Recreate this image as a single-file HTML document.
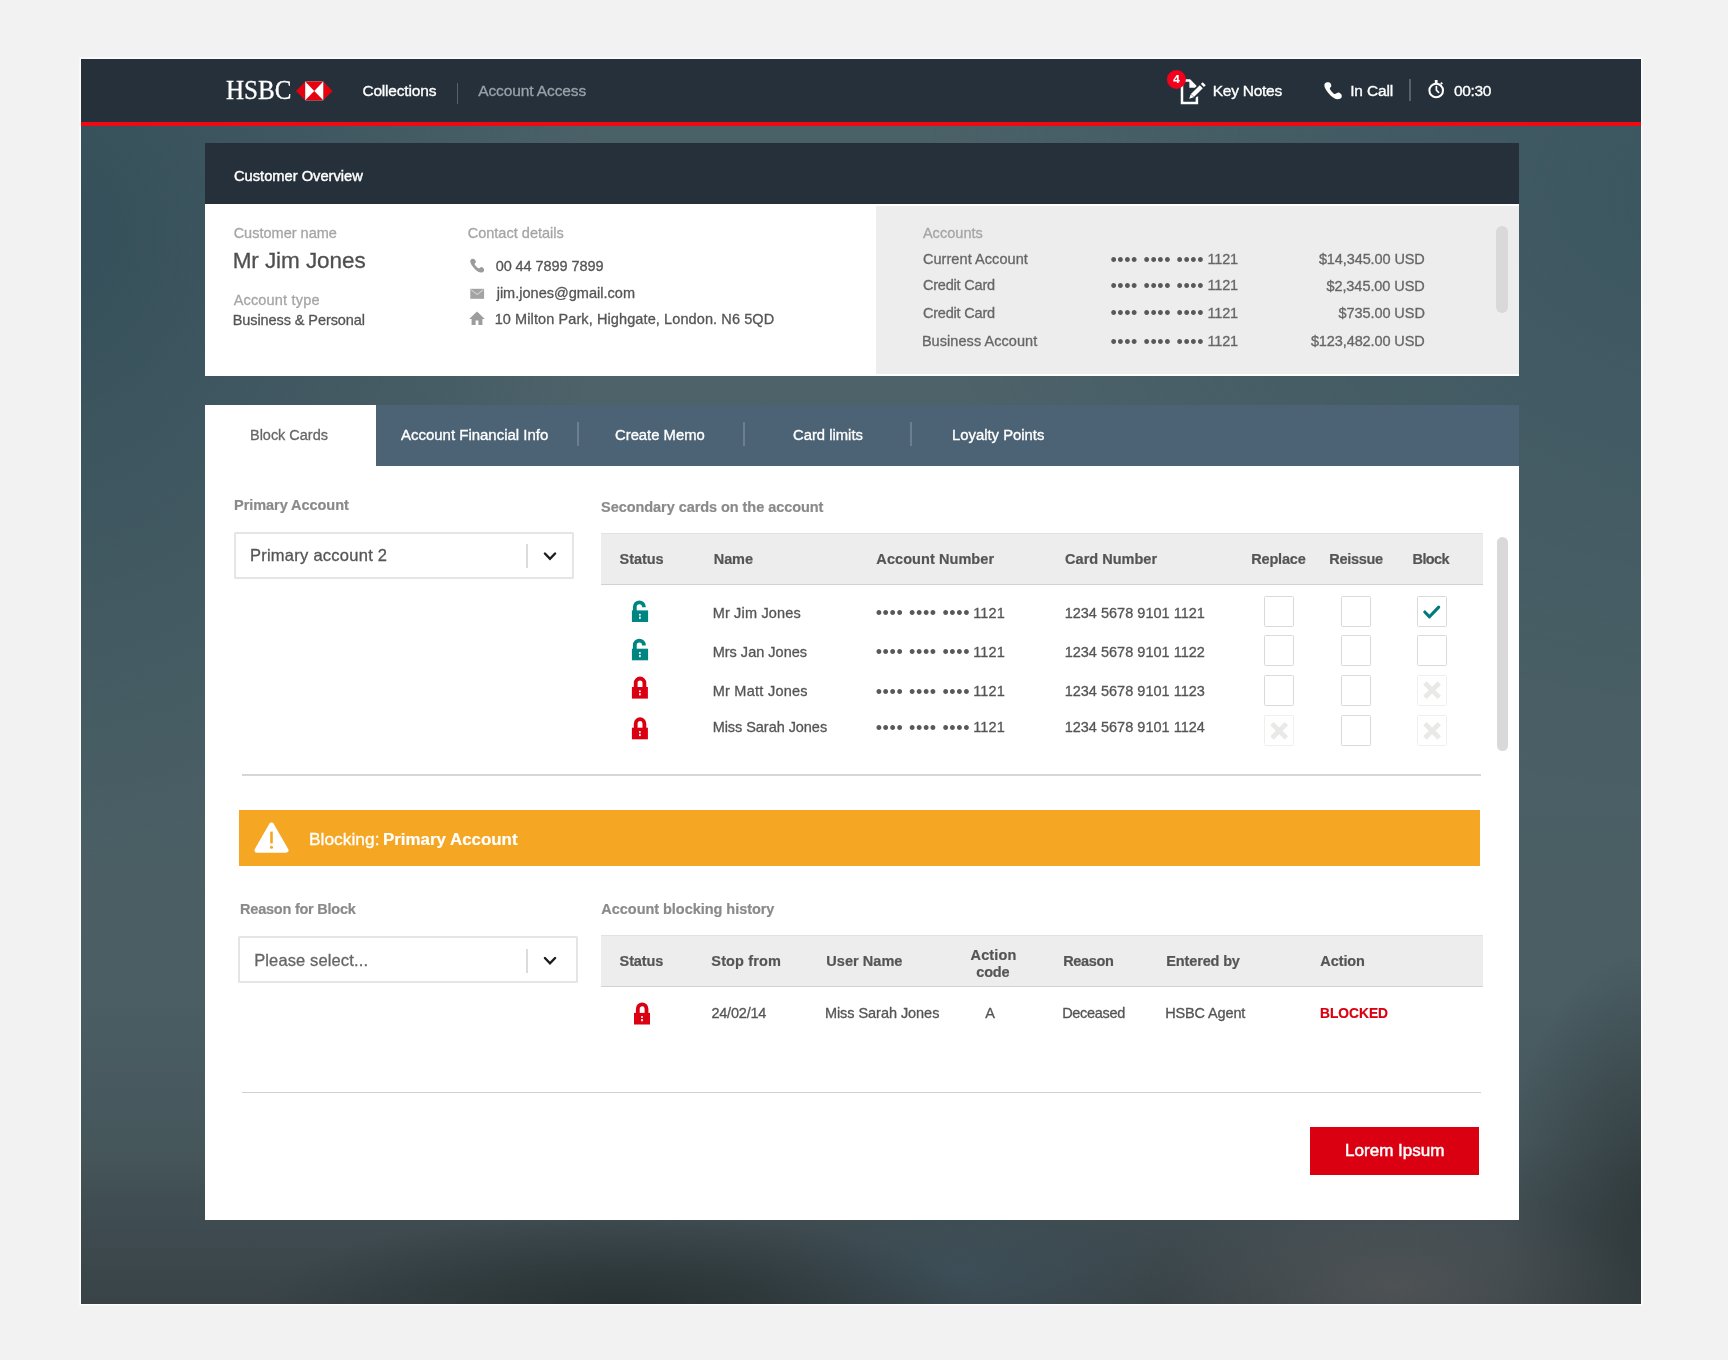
<!DOCTYPE html>
<html lang="en"><head><meta charset="utf-8"><title>HSBC Collections - Account Access</title>
<style>
*{margin:0;padding:0;box-sizing:border-box}
html,body{width:1728px;height:1360px;overflow:hidden}
body{background:#f2f2f2;font-family:"Liberation Sans",sans-serif;position:relative}
.t{position:absolute;white-space:pre;line-height:1;display:block}
.a{position:absolute}
#frame{left:81px;top:58.8px;width:1560.2px;height:1245.2px;overflow:hidden;box-shadow:0 0 0 1.6px #fcfcfc;
 background:
  radial-gradient(ellipse 240px 110px at 1315px 1228px, rgba(90,90,92,.62), rgba(90,90,92,0) 100%),
  radial-gradient(ellipse 360px 95px at 540px 1250px, rgba(36,46,48,.85), rgba(36,46,48,0) 100%),
  radial-gradient(ellipse 210px 80px at 880px 1215px, rgba(62,84,98,.55), rgba(62,84,98,0) 100%),
  radial-gradient(ellipse 150px 260px at 1570px 1150px, rgba(44,52,54,.78), rgba(44,52,54,0) 100%),
  radial-gradient(ellipse 560px 620px at -40px 180px, rgba(46,74,86,.8), rgba(46,74,86,0) 100%),
  radial-gradient(ellipse 820px 600px at 1660px 140px, rgba(48,78,90,.62), rgba(48,78,90,0) 100%),
  linear-gradient(180deg,#4a6067 0%,#4d6269 25%,#4b6066 50%,#4a5e64 75%,#46575c 87%,#3f4c51 93%,#394347 100%)}
#topbar{left:81px;top:58.8px;width:1560.2px;height:63.2px;background:#25303a}
#redline{left:81px;top:121.7px;width:1560.2px;height:4.6px;background:#ee0a14}
#cohead{left:205px;top:142.5px;width:1313.7px;height:61.5px;background:#25303a}
#cobody{left:205px;top:204px;width:1313.7px;height:172.3px;background:#fff}
#cogray{left:876.3px;top:205.6px;width:642.4px;height:168.4px;background:#ededed}
.sb{background:#d9d9d9;border-radius:6px}
#tabbar{left:205px;top:404.5px;width:1313.7px;height:61.8px;background:#4c6375}
#tabact{left:205px;top:404.5px;width:170.8px;height:63px;background:#fff}
#main{left:205px;top:466px;width:1313.7px;height:754.2px;background:#fff}
.tdiv{width:1.6px;height:24px;top:422.3px;background:#6b7f8f}
.sel{border:2px solid #e5e5e5;background:#fff;border-radius:1.5px}
.seldiv{width:1.5px;background:#dcdcdc}
.th{background:#ededed;border-top:1.5px solid #e2e2e2;border-bottom:1.5px solid #d2d2d2}
.hr{height:2px;background:#d6d6d6}
.cb{width:30.3px;height:31px;border:1.5px solid #d9d9d9;border-radius:1.5px;background:#fff}
.cb.dis{border-color:#efefef}
#banner{left:239px;top:810.2px;width:1241.3px;height:56px;background:#f5a623}
#btn{left:1310.3px;top:1127px;width:169.2px;height:47.6px;background:#db0011}
svg{position:absolute;overflow:visible}
#txt{position:absolute;left:0;top:0;width:1728px;height:1360px;will-change:transform}

</style></head><body>
<div id=frame class="a"></div>
<div id=topbar class="a"></div>
<div id=redline class="a"></div>
<div class="a" style="left:456.7px;top:82.5px;width:1.6px;height:21.5px;background:#56616b"></div>
<div class="a" style="left:1409.3px;top:79.3px;width:1.8px;height:21.3px;background:#56616b"></div>
<div id=cohead class="a"></div>
<div id=cobody class="a"></div>
<div id=cogray class="a"></div>
<div class="a sb" style="left:1496px;top:225.5px;width:12px;height:87px"></div>
<div id=main class="a"></div>
<div id=tabbar class="a"></div>
<div id=tabact class="a"></div>
<div class="a tdiv" style="left:577.0px"></div>
<div class="a tdiv" style="left:743.4px"></div>
<div class="a tdiv" style="left:910.2px"></div>
<div class="a sel" style="left:233.5px;top:531.5px;width:340px;height:47.6px"></div>
<div class="a seldiv" style="left:526px;top:544.4px;height:24px"></div>
<div class="a sel" style="left:238px;top:935.9px;width:339.8px;height:47.6px"></div>
<div class="a seldiv" style="left:526px;top:948.9px;height:24px"></div>
<div class="a th" style="left:600.7px;top:532.6px;width:882.2px;height:52.4px"></div>
<div class="a th" style="left:600.7px;top:935px;width:882.2px;height:52.4px"></div>
<div class="a sb" style="left:1497px;top:537px;width:11px;height:214.3px"></div>
<div class="a hr" style="left:242px;top:774px;width:1239.3px"></div>
<div class="a hr" style="left:242px;top:1092px;width:1239.3px;height:1px;background:#d0d0d0"></div>
<div class="a cb" style="left:1264px;top:596px"></div>
<div class="a cb" style="left:1340.5px;top:596px"></div>
<div class="a cb" style="left:1417px;top:596px"></div>
<div class="a cb" style="left:1264px;top:635.2px"></div>
<div class="a cb" style="left:1340.5px;top:635.2px"></div>
<div class="a cb" style="left:1417px;top:635.2px"></div>
<div class="a cb" style="left:1264px;top:674.8px"></div>
<div class="a cb" style="left:1340.5px;top:674.8px"></div>
<div class="a cb dis" style="left:1417px;top:674.8px"></div>
<div class="a cb dis" style="left:1264px;top:715.4px"></div>
<div class="a cb" style="left:1340.5px;top:715.4px"></div>
<div class="a cb dis" style="left:1417px;top:715.4px"></div>
<div id=banner class="a"></div>
<div id=btn class="a"></div>
<svg width="1728" height="1360" viewBox="0 0 1728 1360" style="left:0;top:0"><g><polygon points="296,90.9 305.2,81.5 305.2,100.3" fill="#e8000f"/><polygon points="332.5,90.9 323.3,81.5 323.3,100.3" fill="#e8000f"/><rect x="305.2" y="81.5" width="18.1" height="18.8" fill="#fff"/><polygon points="305.2,81.5 323.3,81.5 314.25,90.9" fill="#e8000f"/><polygon points="305.2,100.3 323.3,100.3 314.25,90.9" fill="#e8000f"/></g>
<g fill="none" stroke="#fff" stroke-width="2.5"><path d="M1196.9,96.5 V103 H1182 V80.4 H1189.6 L1196.6,87.6"/></g><polygon points="1189.4,80 1189.4,87.8 1197,87.8" fill="#fff"/><g stroke-linecap="butt"><path d="M1190,98 L1204.6,83.4" stroke="#25303a" stroke-width="7.5"/><path d="M1192.4,95.6 L1201.3,86.7" stroke="#fff" stroke-width="4.3"/><path d="M1202.4,85.6 L1204.2,83.8" stroke="#fff" stroke-width="4.3"/><polygon points="1189.2,98.8 1190.7,94.3 1193.8,97.3" fill="#fff"/></g>
<circle cx="1176.4" cy="79.4" r="9.5" fill="#f2001c"/>
<path transform="translate(1318.0,76.0) scale(1.0)" d="M6.49,8.24 C6.71,7.36 7.53,6.81 8.24,6.49 C8.94,6.16 9.95,6.06 10.71,6.28 C11.46,6.50 12.34,7.15 12.77,7.82 C13.19,8.49 13.43,9.51 13.28,10.29 C13.13,11.08 11.82,11.74 11.84,12.56 C11.86,13.38 12.64,14.34 13.38,15.24 C14.12,16.13 15.41,17.59 16.27,17.91 C17.12,18.24 17.78,17.43 18.53,17.19 C19.28,16.95 20.04,16.32 20.79,16.47 C21.55,16.63 22.56,17.47 23.06,18.12 C23.56,18.77 23.88,19.65 23.78,20.38 C23.68,21.12 23.15,22.05 22.44,22.54 C21.74,23.04 20.59,23.40 19.56,23.37 C18.53,23.33 17.43,22.99 16.27,22.34 C15.10,21.69 13.74,20.59 12.56,19.46 C11.38,18.32 10.11,16.83 9.16,15.54 C8.22,14.26 7.34,12.95 6.90,11.74 C6.45,10.52 6.26,9.11 6.49,8.24Z" fill="#fff"/>
<path transform="translate(465.16,253.92) scale(0.8)" d="M6.49,8.24 C6.71,7.36 7.53,6.81 8.24,6.49 C8.94,6.16 9.95,6.06 10.71,6.28 C11.46,6.50 12.34,7.15 12.77,7.82 C13.19,8.49 13.43,9.51 13.28,10.29 C13.13,11.08 11.82,11.74 11.84,12.56 C11.86,13.38 12.64,14.34 13.38,15.24 C14.12,16.13 15.41,17.59 16.27,17.91 C17.12,18.24 17.78,17.43 18.53,17.19 C19.28,16.95 20.04,16.32 20.79,16.47 C21.55,16.63 22.56,17.47 23.06,18.12 C23.56,18.77 23.88,19.65 23.78,20.38 C23.68,21.12 23.15,22.05 22.44,22.54 C21.74,23.04 20.59,23.40 19.56,23.37 C18.53,23.33 17.43,22.99 16.27,22.34 C15.10,21.69 13.74,20.59 12.56,19.46 C11.38,18.32 10.11,16.83 9.16,15.54 C8.22,14.26 7.34,12.95 6.90,11.74 C6.45,10.52 6.26,9.11 6.49,8.24Z" fill="#9b9b9b"/>
<g fill="none" stroke="#fff"><circle cx="1436.2" cy="90.5" r="6.8" stroke-width="2.05"/><path d="M1436.4,86.6 V90.2 L1438.6,92.4" stroke-width="1.7" stroke-linecap="round" stroke-linejoin="round"/><path d="M1434.8,81.5 H1437.6" stroke-width="3"/><path d="M1440.9,84.0 L1442.2,82.7" stroke-width="2"/></g>
<rect x="470.3" y="288.8" width="13.8" height="10" fill="#a3a3a3"/><path d="M471,289.6 L477.2,294.4 L483.4,289.6" fill="none" stroke="#cfcfcf" stroke-width="1.2"/>
<g fill="#9d9d9d"><polygon points="469.2,319 477,311.4 484.8,319"/><path d="M471.6,318.5 H482.4 V325 H478.4 V320.6 H475.6 V325 H471.6 Z"/></g>
<g transform="translate(631.9,600.3)"><rect x="0" y="10.1" width="16.2" height="11.6" fill="#008580"/><path d="M2.9,10.6 V6.55 A4.55,4.55 0 0 1 12,6.55 V7" fill="none" stroke="#008580" stroke-width="3.8"/><circle cx="8" cy="14.4" r="1" fill="#fff"/><rect x="7.2" y="16.3" width="1.6" height="2.3" fill="#fff"/></g>
<g transform="translate(631.9,638.6)"><rect x="0" y="10.1" width="16.2" height="11.6" fill="#008580"/><path d="M2.9,10.6 V6.55 A4.55,4.55 0 0 1 12,6.55 V7" fill="none" stroke="#008580" stroke-width="3.8"/><circle cx="8" cy="14.4" r="1" fill="#fff"/><rect x="7.2" y="16.3" width="1.6" height="2.3" fill="#fff"/></g>
<g transform="translate(631.9,676.6)"><rect x="0" y="10.4" width="16" height="11.6" fill="#db0011"/><path d="M3.8,11 V6.25 A4.35,4.35 0 0 1 12.5,6.25 V11" fill="none" stroke="#db0011" stroke-width="3.8"/><circle cx="8" cy="14.6" r="1" fill="#fff"/><rect x="7.2" y="16.5" width="1.6" height="2.3" fill="#fff"/></g>
<g transform="translate(631.9,717.3)"><rect x="0" y="10.4" width="16" height="11.6" fill="#db0011"/><path d="M3.8,11 V6.25 A4.35,4.35 0 0 1 12.5,6.25 V11" fill="none" stroke="#db0011" stroke-width="3.8"/><circle cx="8" cy="14.6" r="1" fill="#fff"/><rect x="7.2" y="16.5" width="1.6" height="2.3" fill="#fff"/></g>
<g transform="translate(634,1002.5)"><rect x="0" y="10.4" width="16" height="11.6" fill="#db0011"/><path d="M3.8,11 V6.25 A4.35,4.35 0 0 1 12.5,6.25 V11" fill="none" stroke="#db0011" stroke-width="3.8"/><circle cx="8" cy="14.6" r="1" fill="#fff"/><rect x="7.2" y="16.5" width="1.6" height="2.3" fill="#fff"/></g>
<path d="M1424.8,612.0 L1429.5,616.8 L1438.7,607.1" fill="none" stroke="#007a7c" stroke-width="3.1" stroke-linecap="round" stroke-linejoin="round"/>
<path d="M1424.8999999999999,683.0 L1439.3,697.4000000000001 M1439.3,683.0 L1424.8999999999999,697.4000000000001" stroke="#e9e9e7" stroke-width="4.8" stroke-linecap="butt" fill="none"/>
<path d="M1424.8999999999999,723.5999999999999 L1439.3,738.0 M1439.3,723.5999999999999 L1424.8999999999999,738.0" stroke="#e9e9e7" stroke-width="4.8" stroke-linecap="butt" fill="none"/>
<path d="M1272.0,723.5999999999999 L1286.4,738.0 M1286.4,723.5999999999999 L1272.0,738.0" stroke="#e9e9e7" stroke-width="4.8" stroke-linecap="butt" fill="none"/>
<polygon points="271.5,825 286,850.2 257,850.2" fill="#fff" stroke="#fff" stroke-width="5" stroke-linejoin="round"/><path d="M271.5,831.6 V843.4" stroke="#f5a623" stroke-width="2.6"/><circle cx="271.5" cy="847.2" r="1.55" fill="#f5a623"/>
<path d="M544.9,553.5 L550,558.8 L555.1,553.5" fill="none" stroke="#1c1c1c" stroke-width="2.4" stroke-linecap="round" stroke-linejoin="miter"/>
<path d="M544.9,958.0 L550,963.3 L555.1,958.0" fill="none" stroke="#1c1c1c" stroke-width="2.4" stroke-linecap="round" stroke-linejoin="miter"/></svg>
<div id="txt">
<span class="t" style="font-size:27px;color:#ffffff;font-family:'Liberation Serif', serif;-webkit-text-stroke:0.3px #ffffff;transform:scaleX(0.9277);transform-origin:0 0;left:226.25px;top:77.25px;">HSBC</span>
<span class="t" style="font-size:15.5px;color:#ffffff;-webkit-text-stroke:0.35px #ffffff;letter-spacing:-0.18px;left:362.38px;top:82.68px;">Collections</span>
<span class="t" style="font-size:15.5px;color:#9aa2aa;-webkit-text-stroke:0.3px #9aa2aa;letter-spacing:-0.1px;left:478.15px;top:82.68px;">Account Access</span>
<span class="t" style="font-size:15.5px;color:#ffffff;-webkit-text-stroke:0.35px #ffffff;letter-spacing:-0.24px;left:1212.67px;top:82.78px;">Key Notes</span>
<span class="t" style="font-size:15.5px;color:#ffffff;-webkit-text-stroke:0.35px #ffffff;letter-spacing:-0.14px;left:1350.17px;top:82.78px;">In Call</span>
<span class="t" style="font-size:15.5px;color:#ffffff;-webkit-text-stroke:0.35px #ffffff;letter-spacing:-0.32px;left:1453.92px;top:82.78px;">00:30</span>
<span class="t" style="font-size:11.5px;color:#ffffff;font-weight:700;-webkit-text-stroke:0.2px #ffffff;left:1026.4px;width:300px;text-align:center;top:73.87px;">4</span>
<span class="t" style="font-size:15.5px;color:#ffffff;-webkit-text-stroke:0.45px #ffffff;transform:scaleX(0.9464);transform-origin:0 0;left:233.97px;top:168.18px;">Customer Overview</span>
<span class="t" style="font-size:14.5px;color:#a5a5a5;-webkit-text-stroke:0.3px #a5a5a5;letter-spacing:0.01px;left:233.65px;top:225.73px;">Customer name</span>
<span class="t" style="font-size:22.5px;color:#4f4f4f;-webkit-text-stroke:0.3px #4f4f4f;letter-spacing:-0.07px;left:232.65px;top:250.35px;">Mr Jim Jones</span>
<span class="t" style="font-size:14.5px;color:#a5a5a5;-webkit-text-stroke:0.3px #a5a5a5;letter-spacing:0.18px;left:233.65px;top:293.13px;">Account type</span>
<span class="t" style="font-size:14.5px;color:#555555;-webkit-text-stroke:0.3px #555555;letter-spacing:-0.08px;left:232.65px;top:313.03px;">Business &amp; Personal</span>
<span class="t" style="font-size:14.5px;color:#a5a5a5;-webkit-text-stroke:0.3px #a5a5a5;letter-spacing:0.02px;left:467.65px;top:225.73px;">Contact details</span>
<span class="t" style="font-size:14.5px;color:#555555;-webkit-text-stroke:0.3px #555555;letter-spacing:-0.06px;left:495.65px;top:258.98px;">00 44 7899 7899</span>
<span class="t" style="font-size:14.5px;color:#555555;-webkit-text-stroke:0.3px #555555;letter-spacing:0.02px;left:496.65px;top:285.73px;">jim.jones@gmail.com</span>
<span class="t" style="font-size:14.5px;color:#555555;-webkit-text-stroke:0.3px #555555;letter-spacing:0.1px;left:494.65px;top:312.13px;">10 Milton Park, Highgate, London. N6 5QD</span>
<span class="t" style="font-size:14.5px;color:#a5a5a5;-webkit-text-stroke:0.3px #a5a5a5;letter-spacing:0.04px;left:922.9px;top:225.98px;">Accounts</span>
<span class="t" style="font-size:14.5px;color:#666;-webkit-text-stroke:0.3px #666;letter-spacing:0.07px;left:922.9px;top:252.13px;">Current Account</span>
<span class="t" style="font-size:18px;color:#595959;letter-spacing:0.58px;left:1110.4px;top:250.66px;">•••• •••• ••••</span>
<span class="t" style="font-size:14.5px;color:#666;-webkit-text-stroke:0.3px #666;letter-spacing:-0.14px;left:1207.4px;top:252.13px;">1121</span>
<span class="t" style="font-size:14.5px;color:#666;-webkit-text-stroke:0.3px #666;letter-spacing:-0.1px;left:1318.9px;top:252.13px;">$14,345.00 USD</span>
<span class="t" style="font-size:14.5px;color:#666;-webkit-text-stroke:0.3px #666;letter-spacing:-0.19px;left:922.9px;top:278.23px;">Credit Card</span>
<span class="t" style="font-size:18px;color:#595959;letter-spacing:0.58px;left:1110.4px;top:276.76px;">•••• •••• ••••</span>
<span class="t" style="font-size:14.5px;color:#666;-webkit-text-stroke:0.3px #666;letter-spacing:-0.14px;left:1207.4px;top:278.23px;">1121</span>
<span class="t" style="font-size:14.5px;color:#666;-webkit-text-stroke:0.3px #666;letter-spacing:-0.06px;left:1326.4px;top:279.13px;">$2,345.00 USD</span>
<span class="t" style="font-size:14.5px;color:#666;-webkit-text-stroke:0.3px #666;letter-spacing:-0.19px;left:922.9px;top:305.53px;">Credit Card</span>
<span class="t" style="font-size:18px;color:#595959;letter-spacing:0.58px;left:1110.4px;top:304.06px;">•••• •••• ••••</span>
<span class="t" style="font-size:14.5px;color:#666;-webkit-text-stroke:0.3px #666;letter-spacing:-0.14px;left:1207.4px;top:305.53px;">1121</span>
<span class="t" style="font-size:14.5px;color:#666;-webkit-text-stroke:0.3px #666;letter-spacing:-0.06px;left:1338.4px;top:305.53px;">$735.00 USD</span>
<span class="t" style="font-size:14.5px;color:#666;-webkit-text-stroke:0.3px #666;letter-spacing:0.06px;left:921.9px;top:334.13px;">Business Account</span>
<span class="t" style="font-size:18px;color:#595959;letter-spacing:0.58px;left:1110.4px;top:332.66px;">•••• •••• ••••</span>
<span class="t" style="font-size:14.5px;color:#666;-webkit-text-stroke:0.3px #666;letter-spacing:-0.14px;left:1207.4px;top:334.13px;">1121</span>
<span class="t" style="font-size:14.5px;color:#666;-webkit-text-stroke:0.3px #666;letter-spacing:-0.1px;left:1310.9px;top:334.13px;">$123,482.00 USD</span>
<span class="t" style="font-size:15.5px;color:#666;-webkit-text-stroke:0.3px #666;transform:scaleX(0.9323);transform-origin:0 0;left:249.72px;top:426.78px;">Block Cards</span>
<span class="t" style="font-size:15.5px;color:#ffffff;-webkit-text-stroke:0.35px #ffffff;transform:scaleX(0.9656);transform-origin:0 0;left:401.43px;top:426.78px;">Account Financial Info</span>
<span class="t" style="font-size:15.5px;color:#ffffff;-webkit-text-stroke:0.35px #ffffff;transform:scaleX(0.9558);transform-origin:0 0;left:615.17px;top:426.78px;">Create Memo</span>
<span class="t" style="font-size:15.5px;color:#ffffff;-webkit-text-stroke:0.35px #ffffff;transform:scaleX(0.9551);transform-origin:0 0;left:792.67px;top:426.78px;">Card limits</span>
<span class="t" style="font-size:15.5px;color:#ffffff;-webkit-text-stroke:0.35px #ffffff;transform:scaleX(0.9572);transform-origin:0 0;left:952.22px;top:426.78px;">Loyalty Points</span>
<span class="t" style="font-size:14.5px;color:#8a8a8a;font-weight:700;-webkit-text-stroke:0.2px #8a8a8a;letter-spacing:-0.06px;left:234.1px;top:498.23px;">Primary Account</span>
<span class="t" style="font-size:16.5px;color:#555555;-webkit-text-stroke:0.3px #555555;letter-spacing:0.26px;left:249.9px;top:547.28px;">Primary account 2</span>
<span class="t" style="font-size:14.5px;color:#8a8a8a;font-weight:700;-webkit-text-stroke:0.2px #8a8a8a;letter-spacing:-0.06px;left:601.1px;top:500.23px;">Secondary cards on the account</span>
<span class="t" style="font-size:14.5px;color:#555;font-weight:700;-webkit-text-stroke:0.2px #555;letter-spacing:-0.09px;left:619.6px;top:552.03px;">Status</span>
<span class="t" style="font-size:14.5px;color:#555;font-weight:700;-webkit-text-stroke:0.2px #555;letter-spacing:-0.13px;left:713.85px;top:552.03px;">Name</span>
<span class="t" style="font-size:14.5px;color:#555;font-weight:700;-webkit-text-stroke:0.2px #555;letter-spacing:0.07px;left:876.35px;top:552.03px;">Account Number</span>
<span class="t" style="font-size:14.5px;color:#555;font-weight:700;-webkit-text-stroke:0.2px #555;letter-spacing:0.01px;left:1065.1px;top:552.03px;">Card Number</span>
<span class="t" style="font-size:14.5px;color:#555;font-weight:700;-webkit-text-stroke:0.2px #555;letter-spacing:-0.21px;left:1251.35px;top:552.03px;">Replace</span>
<span class="t" style="font-size:14.5px;color:#555;font-weight:700;-webkit-text-stroke:0.2px #555;letter-spacing:-0.33px;left:1329.35px;top:552.03px;">Reissue</span>
<span class="t" style="font-size:14.5px;color:#555;font-weight:700;-webkit-text-stroke:0.2px #555;letter-spacing:-0.66px;left:1412.6px;top:552.03px;">Block</span>
<span class="t" style="font-size:14.5px;color:#555555;-webkit-text-stroke:0.3px #555555;letter-spacing:0.18px;left:712.65px;top:605.63px;">Mr Jim Jones</span>
<span class="t" style="font-size:18px;color:#595959;letter-spacing:0.63px;left:875.7px;top:604.16px;">•••• •••• ••••</span>
<span class="t" style="font-size:14.5px;color:#555555;-webkit-text-stroke:0.3px #555555;letter-spacing:0.19px;left:973.15px;top:605.63px;">1121</span>
<span class="t" style="font-size:14.5px;color:#555555;-webkit-text-stroke:0.3px #555555;letter-spacing:0.01px;left:1064.65px;top:605.63px;">1234 5678 9101 1121</span>
<span class="t" style="font-size:14.5px;color:#555555;-webkit-text-stroke:0.3px #555555;letter-spacing:0.01px;left:712.65px;top:644.88px;">Mrs Jan Jones</span>
<span class="t" style="font-size:18px;color:#595959;letter-spacing:0.63px;left:875.7px;top:643.41px;">•••• •••• ••••</span>
<span class="t" style="font-size:14.5px;color:#555555;-webkit-text-stroke:0.3px #555555;letter-spacing:0.19px;left:973.15px;top:644.88px;">1121</span>
<span class="t" style="font-size:14.5px;color:#555555;-webkit-text-stroke:0.3px #555555;letter-spacing:0.01px;left:1064.65px;top:644.88px;">1234 5678 9101 1122</span>
<span class="t" style="font-size:14.5px;color:#555555;-webkit-text-stroke:0.3px #555555;letter-spacing:0.26px;left:712.65px;top:684.38px;">Mr Matt Jones</span>
<span class="t" style="font-size:18px;color:#595959;letter-spacing:0.63px;left:875.7px;top:682.91px;">•••• •••• ••••</span>
<span class="t" style="font-size:14.5px;color:#555555;-webkit-text-stroke:0.3px #555555;letter-spacing:0.19px;left:973.15px;top:684.38px;">1121</span>
<span class="t" style="font-size:14.5px;color:#555555;-webkit-text-stroke:0.3px #555555;letter-spacing:0.01px;left:1064.65px;top:684.38px;">1234 5678 9101 1123</span>
<span class="t" style="font-size:14.5px;color:#555555;-webkit-text-stroke:0.3px #555555;letter-spacing:-0.05px;left:712.65px;top:720.13px;">Miss Sarah Jones</span>
<span class="t" style="font-size:18px;color:#595959;letter-spacing:0.63px;left:875.7px;top:718.66px;">•••• •••• ••••</span>
<span class="t" style="font-size:14.5px;color:#555555;-webkit-text-stroke:0.3px #555555;letter-spacing:0.19px;left:973.15px;top:720.13px;">1121</span>
<span class="t" style="font-size:14.5px;color:#555555;-webkit-text-stroke:0.3px #555555;letter-spacing:0.01px;left:1064.65px;top:720.13px;">1234 5678 9101 1124</span>
<span class="t" style="font-size:16px;color:#ffffff;-webkit-text-stroke:0.3px #ffffff;transform:scaleX(1.0852);transform-origin:0 0;left:308.96px;top:832.06px;">Blocking:</span>
<span class="t" style="font-size:16px;color:#ffffff;font-weight:700;-webkit-text-stroke:0.2px #ffffff;transform:scaleX(1.0555);transform-origin:0 0;left:383.29px;top:832.06px;">Primary Account</span>
<span class="t" style="font-size:14.5px;color:#8a8a8a;font-weight:700;-webkit-text-stroke:0.2px #8a8a8a;letter-spacing:-0.23px;left:240.1px;top:902.23px;">Reason for Block</span>
<span class="t" style="font-size:16.5px;color:#666;-webkit-text-stroke:0.3px #666;letter-spacing:0.13px;left:254.15px;top:952.28px;">Please select...</span>
<span class="t" style="font-size:14.5px;color:#8a8a8a;font-weight:700;-webkit-text-stroke:0.2px #8a8a8a;letter-spacing:-0.04px;left:601.35px;top:902.23px;">Account blocking history</span>
<span class="t" style="font-size:14.5px;color:#555;font-weight:700;-webkit-text-stroke:0.2px #555;letter-spacing:-0.14px;left:619.6px;top:954.13px;">Status</span>
<span class="t" style="font-size:14.5px;color:#555;font-weight:700;-webkit-text-stroke:0.2px #555;letter-spacing:0.12px;left:711.35px;top:954.13px;">Stop from</span>
<span class="t" style="font-size:14.5px;color:#555;font-weight:700;-webkit-text-stroke:0.2px #555;letter-spacing:0.04px;left:826.35px;top:954.13px;">User Name</span>
<span class="t" style="font-size:14.5px;color:#555;font-weight:700;-webkit-text-stroke:0.2px #555;letter-spacing:-0.36px;left:1063.2px;top:954.13px;">Reason</span>
<span class="t" style="font-size:14.5px;color:#555;font-weight:700;-webkit-text-stroke:0.2px #555;letter-spacing:-0.15px;left:1166.35px;top:954.13px;">Entered by</span>
<span class="t" style="font-size:14.5px;color:#555;font-weight:700;-webkit-text-stroke:0.2px #555;letter-spacing:-0.09px;left:1320.3px;top:954.13px;">Action</span>
<span class="t" style="font-size:14.5px;color:#555;font-weight:700;-webkit-text-stroke:0.2px #555;letter-spacing:0.11px;left:970.6px;top:947.83px;">Action</span>
<span class="t" style="font-size:14.5px;color:#555;font-weight:700;-webkit-text-stroke:0.2px #555;letter-spacing:-0.24px;left:976.35px;top:964.53px;">code</span>
<span class="t" style="font-size:14.5px;color:#555555;-webkit-text-stroke:0.3px #555555;letter-spacing:-0.2px;left:711.4px;top:1005.98px;">24/02/14</span>
<span class="t" style="font-size:14.5px;color:#555555;-webkit-text-stroke:0.3px #555555;letter-spacing:-0.05px;left:824.9px;top:1005.98px;">Miss Sarah Jones</span>
<span class="t" style="font-size:14.5px;color:#555555;-webkit-text-stroke:0.3px #555555;left:985.15px;top:1005.98px;">A</span>
<span class="t" style="font-size:14.5px;color:#555555;-webkit-text-stroke:0.3px #555555;letter-spacing:-0.32px;left:1062.15px;top:1005.98px;">Deceased</span>
<span class="t" style="font-size:14.5px;color:#555555;-webkit-text-stroke:0.3px #555555;letter-spacing:-0.13px;left:1165.15px;top:1005.98px;">HSBC Agent</span>
<span class="t" style="font-size:15px;color:#db0011;font-weight:700;-webkit-text-stroke:0.2px #db0011;transform:scaleX(0.9177);transform-origin:0 0;left:1320.18px;top:1005.2px;">BLOCKED</span>
<span class="t" style="font-size:16px;color:#ffffff;-webkit-text-stroke:0.45px #ffffff;transform:scaleX(1.0664);transform-origin:0 0;left:1344.56px;top:1143.36px;">Lorem Ipsum</span>
</div>
</body></html>
